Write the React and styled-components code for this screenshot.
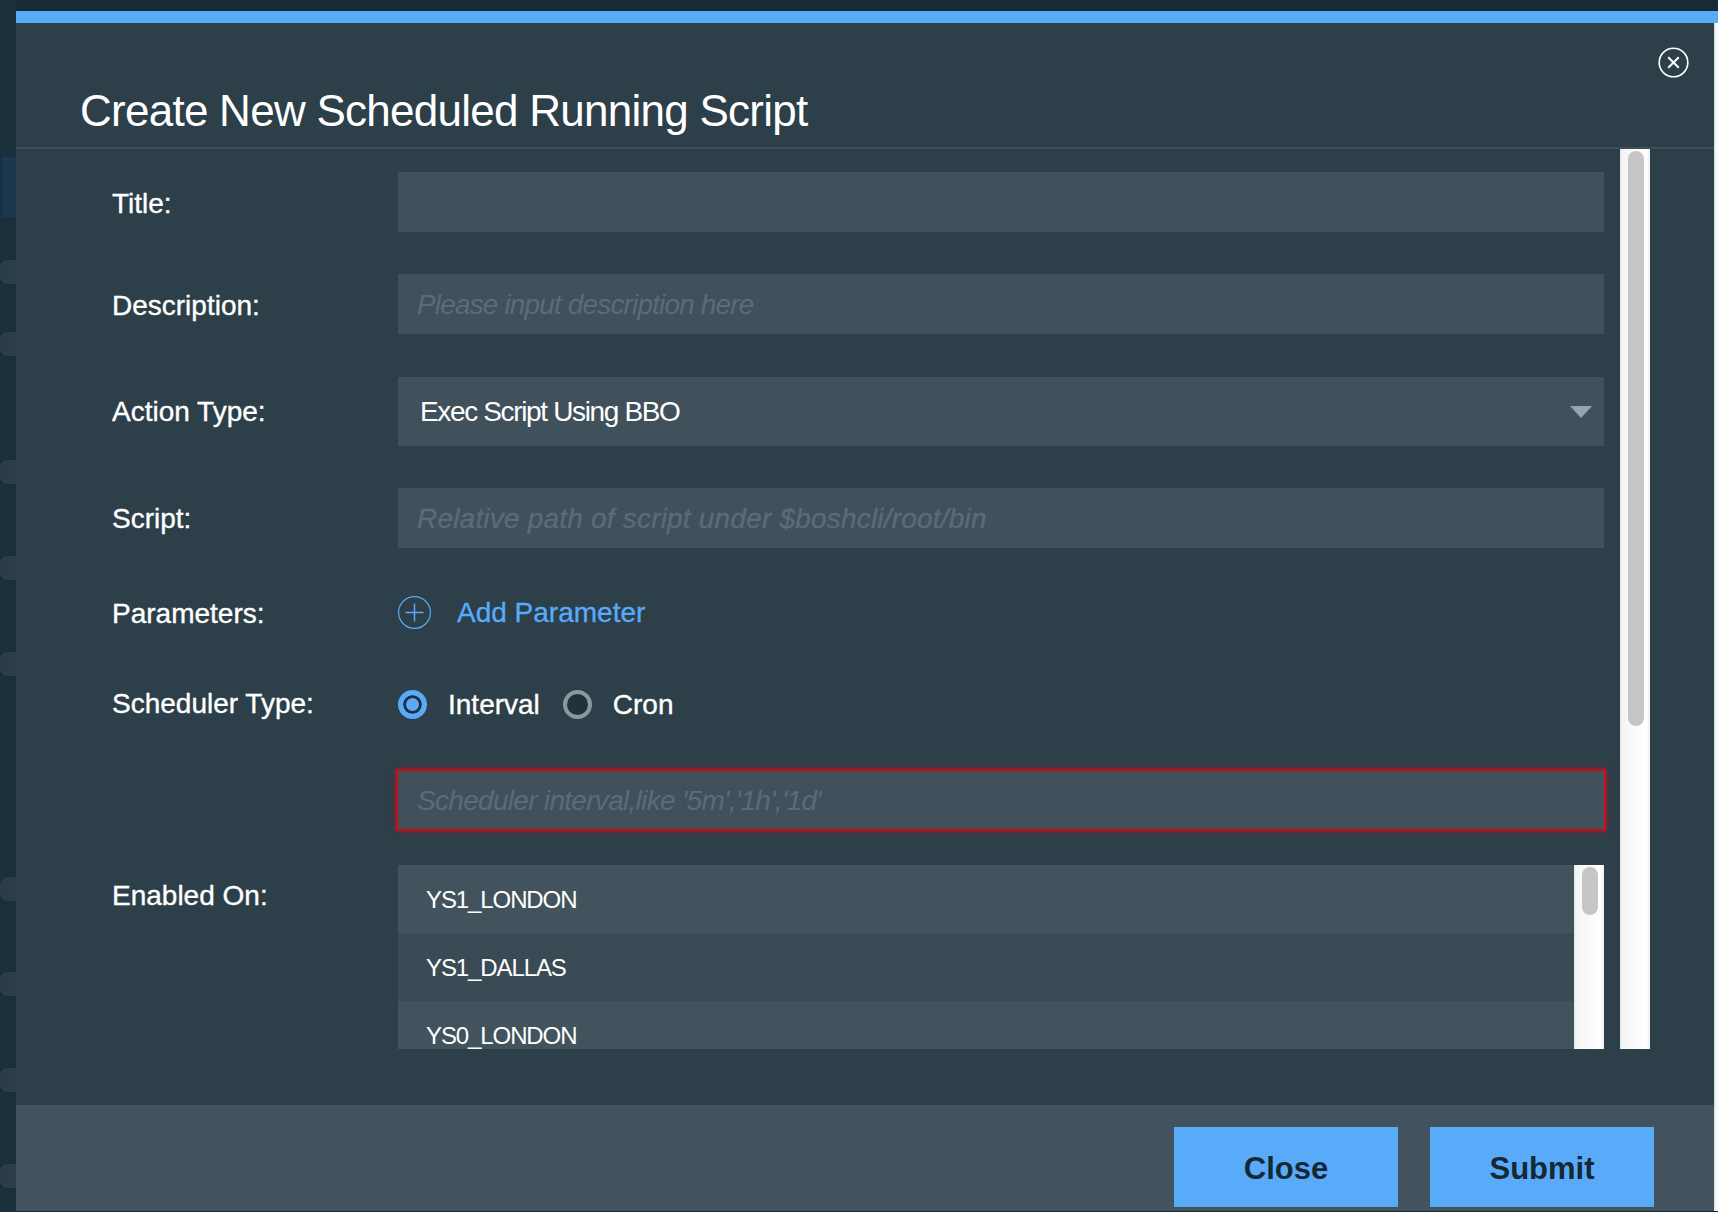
import React from "react";
import styled, { createGlobalStyle } from "styled-components";

const Global = createGlobalStyle`
  html, body {
    margin: 0;
    padding: 0;
    background: #172a37;
  }
  * {
    box-sizing: border-box;
  }
`;

const targets = ["YS1_LONDON", "YS1_DALLAS", "YS0_LONDON"];

const CloseIcon = () => (
  <svg width="31" height="31" viewBox="0 0 31 31" fill="none" stroke="#fff">
    <circle cx="15.5" cy="15.5" r="14.3" strokeWidth="1.6" />
    <path d="M10.2 10.2 20.8 20.8M20.8 10.2 10.2 20.8" strokeWidth="2" />
  </svg>
);

const PlusIcon = () => (
  <svg width="33" height="33" viewBox="0 0 33 33" fill="none" stroke="#5aaafa">
    <circle cx="16.5" cy="16.5" r="15.9" strokeWidth="1.2" />
    <path d="M16.5 7.5v18M7.5 16.5h18" strokeWidth="1.5" />
  </svg>
);

export default function App() {
  return (
    <>
      <Global />
      <Page>
        <Backdrop>
          <SideBlock />
          <SidePill $top={43} />
          <SidePill $top={48} />
          <SidePill $top={104} />
          <SidePill $top={72} />
          <SidePill $top={72} />
          <SidePill $top={201} />
          <SidePill $top={71} />
          <SidePill $top={72} />
          <SidePill $top={72} />
        </Backdrop>
        <Dialog>
          <AccentBar />
          <DialogRow>
            <Panel>
              <Header>
                <Heading>Create New Scheduled Running Script</Heading>
                <IconButton>
                  <CloseIcon />
                </IconButton>
              </Header>
              <Body>
                <Form>
                  <Row $gap={42}>
                    <Label $nudge={3}>Title:</Label>
                    <Input />
                  </Row>
                  <Row $gap={43}>
                    <Label $nudge={3}>Description:</Label>
                    <Input $spacing={-0.85} placeholder="Please input description here" />
                  </Row>
                  <Row $gap={42}>
                    <Label>Action Type:</Label>
                    <Select>
                      Exec Script Using BBO
                      <Caret />
                    </Select>
                  </Row>
                  <Row $gap={48}>
                    <Label $nudge={2}>Script:</Label>
                    <Input $strong $spacing={0.2} placeholder="Relative path of script under $boshcli/root/bin" />
                  </Row>
                  <Row $gap={55}>
                    <Label $nudge={1}>Parameters:</Label>
                    <AddLink>
                      <PlusIcon />
                      Add Parameter
                    </AddLink>
                  </Row>
                  <Row $gap={47}>
                    <Label>Scheduler Type:</Label>
                    <RadioGroup>
                      <Radio $on />
                      <RadioText>Interval</RadioText>
                      <Radio />
                      <RadioText>Cron</RadioText>
                    </RadioGroup>
                  </Row>
                  <Row $gap={34}>
                    <Label />
                    <Input $error $spacing={-0.7} placeholder="Scheduler interval,like '5m','1h','1d'" />
                  </Row>
                  <Row $top>
                    <Label $nudge={14}>Enabled On:</Label>
                    <ListBox>
                      <List>
                        {targets.map((name, i) => (
                          <ListItem key={name} $odd={i % 2 === 1}>
                            {name}
                          </ListItem>
                        ))}
                      </List>
                      <Track $h={184}>
                        <Thumb $h={48} />
                      </Track>
                    </ListBox>
                  </Row>
                </Form>
                <Track $h={900}>
                  <Thumb $h={575} />
                </Track>
              </Body>
              <Footer>
                <Button>Close</Button>
                <Button>Submit</Button>
              </Footer>
            </Panel>
            <Sliver />
          </DialogRow>
        </Dialog>
      </Page>
    </>
  );
}

const Page = styled.div`
  display: flex;
  width: 1718px;
  height: 1212px;
  overflow: hidden;
  background: #172a37;
  font-family: "Liberation Sans", Arial, sans-serif;
  color: #fff;
`;

const Backdrop = styled.div`
  width: 16px;
  flex: none;
  display: flex;
  flex-direction: column;
  align-items: flex-end;
  padding-top: 157px;
  background: #1a2f3c;
`;

const SideBlock = styled.div`
  width: 14px;
  height: 60px;
  background: #1c384e;
`;

const SidePill = styled.div`
  width: 16px;
  height: 24px;
  flex: none;
  margin-top: ${(p) => p.$top}px;
  border-radius: 8px 0 0 8px;
  background: #2b3d49;
`;

const Dialog = styled.div`
  flex: 1;
  display: flex;
  flex-direction: column;
  padding: 11px 0 1px;
`;

const AccentBar = styled.div`
  height: 12px;
  flex: none;
  background: #5aaafa;
`;

const DialogRow = styled.div`
  flex: 1;
  display: flex;
  min-height: 0;
`;

const Panel = styled.div`
  flex: 1;
  display: flex;
  flex-direction: column;
  background: #2d3f49;
`;

const Sliver = styled.div`
  width: 4px;
  flex: none;
  background: linear-gradient(to right, #d9d9d9, #f8f8f8 2px);
`;

const Header = styled.div`
  height: 126px;
  flex: none;
  display: flex;
  justify-content: space-between;
  padding: 24px 25px 0 64px;
  border-bottom: 2px solid #3d4e59;
`;

const Heading = styled.h2`
  margin: 39px 0 0;
  font-size: 44px;
  font-weight: 400;
  line-height: 50px;
  letter-spacing: -0.74px;
`;

const IconButton = styled.div`
  width: 31px;
  height: 31px;
`;

const Body = styled.div`
  height: 956px;
  flex: none;
  display: flex;
  align-items: flex-start;
  gap: 8px;
  padding-left: 96px;
`;

const Form = styled.div`
  width: 1500px;
  height: 900px;
  overflow: hidden;
  padding-top: 23px;
`;

const Row = styled.div`
  display: flex;
  align-items: ${(p) => (p.$top ? "flex-start" : "center")};
  margin-bottom: ${(p) => p.$gap || 0}px;
`;

const Label = styled.div`
  width: 286px;
  flex: none;
  font-size: 28px;
  line-height: 34px;
  letter-spacing: 0;
  -webkit-text-stroke: 0.35px #fff;
  padding-top: ${(p) => p.$nudge || 0}px;
`;

const Input = styled.input`
  display: block;
  width: ${(p) => (p.$error ? 1210 : 1206)}px;
  height: ${(p) => (p.$error ? 62 : 60)}px;
  margin-left: ${(p) => (p.$error ? -2 : 0)}px;
  padding: 2px 19px 0;
  border: ${(p) => (p.$error ? "2px solid #c4101c" : "none")};
  outline: none;
  border-radius: 0;
  box-shadow: ${(p) => (p.$error ? "0 0 4px #c4101c" : "none")};
  background: #40515c;
  color: #fff;
  font-family: inherit;
  font-size: 28px;
  -webkit-text-stroke: ${(p) => (p.$strong ? "0.35px #5a6c78" : "0")};
  &::placeholder {
    color: #5a6c78;
    font-style: italic;
    letter-spacing: ${(p) => p.$spacing || 0}px;
    opacity: 1;
  }
`;

const Select = styled.div`
  width: 1206px;
  height: 69px;
  display: flex;
  align-items: center;
  justify-content: space-between;
  padding: 0 12px 0 22px;
  background: #40515c;
  font-size: 28px;
  letter-spacing: -1.35px;
`;

const Caret = styled.span`
  width: 0;
  height: 0;
  border-left: 11.5px solid transparent;
  border-right: 11.5px solid transparent;
  border-top: 12px solid #95a5b0;
`;

const AddLink = styled.div`
  display: flex;
  align-items: center;
  gap: 26px;
  margin-bottom: 2px;
  color: #5aaafa;
  font-size: 28px;
  line-height: 33px;
  letter-spacing: 0;
  -webkit-text-stroke: 0.3px #5aaafa;
`;

const RadioGroup = styled.div`
  display: flex;
  align-items: center;
`;

const Radio = styled.span`
  width: 29px;
  height: 29px;
  border-radius: 50%;
  background: ${(p) => (p.$on ? "#5aaafa" : "#21323e")};
  border: ${(p) => (p.$on ? "5px solid #5aaafa" : "4px solid #8c979f")};
  box-shadow: ${(p) => (p.$on ? "inset 0 0 0 3px #21323e" : "none")};
`;

const RadioText = styled.span`
  margin: 2px 23px 0 21px;
  font-size: 28px;
  line-height: 34px;
  -webkit-text-stroke: 0.35px #fff;
`;

const ListBox = styled.div`
  width: 1206px;
  height: 184px;
  display: flex;
  overflow: hidden;
`;

const List = styled.div`
  flex: 1;
`;

const ListItem = styled.div`
  height: 68px;
  display: flex;
  align-items: center;
  padding: 2px 0 0 28px;
  background: ${(p) => (p.$odd ? "#3a4b55" : "#42535d")};
  font-size: 24px;
  letter-spacing: -1.1px;
`;

const Track = styled.div`
  width: 30px;
  height: ${(p) => p.$h}px;
  flex: none;
  padding: 2px 6px 0 8px;
  background: linear-gradient(to right, #e4e4e4, #f5f5f5 2px, #f7f7f7 8px, #fff 24px, #fff 27px, #efefef);
`;

const Thumb = styled.div`
  height: ${(p) => p.$h}px;
  border-radius: 8px;
  background: #c6c6c6;
`;

const Footer = styled.div`
  flex: 1;
  display: flex;
  justify-content: flex-end;
  gap: 32px;
  padding: 22px 60px 0 0;
  background: #42535d;
`;

const Button = styled.div`
  width: 224px;
  height: 80px;
  display: flex;
  align-items: center;
  justify-content: center;
  padding-top: 3px;
  background: #5aaafa;
  color: #152935;
  font-size: 31px;
  font-weight: 700;
`;
